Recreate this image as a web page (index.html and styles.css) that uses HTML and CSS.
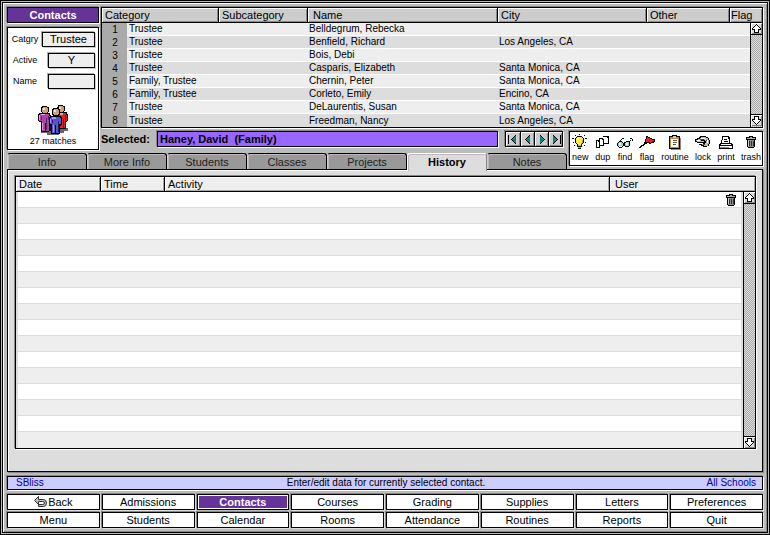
FILE: index.html
```html
<!DOCTYPE html>
<html lang="en">
<head>
    <meta charset="UTF-8">
    <meta name="viewport" content="width=device-width, initial-scale=1.0">
    <title>Contacts</title>
    <link rel="stylesheet" href="styles.css">
</head>
<body>
    <svg class="sprites" width="0" height="0" aria-hidden="true">
        <symbol id="trash" viewBox="0 0 12 12">
            <path fill="#000" d="M4 0h4v1h3v3h-1v7h-1v1H3v-1H2V4H1V1h3z"/>
            <path fill="#aaa" d="M5 1h2v1H5zM2 2h8v1H2z"/>
            <path fill="#888" d="M3 4h6v7H3z"/>
            <path fill="#333" d="M4 5h1v5H4zM6 5h1v5H6zM8 5h1v5H8z"/>
            <path fill="#ccc" d="M3 4h1v6H3z"/>
        </symbol>
        <symbol id="arrow" viewBox="0 0 9 9">
            <path fill="#000" d="M4 0h1v1h1v1h1v1h1v1h1v2H7v3H2V6H0V4h1V3h1V2h1V1h1z"/>
            <path fill="#fff" d="M4 1h1v1h1v1h1v1h1v1H6v3H3V5H1V4h1V3h1V2h1z"/>
        </symbol>
    </svg>

    <div class="window">
        <div class="top">
            <aside class="sidebar">
                <h1 class="title">Contacts</h1>
                <form class="filter">
                    <label for="category">Catgry</label>
                    <input class="field wide" id="category" type="text" value="Trustee">
                    <label for="active">Active</label>
                    <input class="field" id="active" type="text" value="Y">
                    <label for="name">Name</label>
                    <input class="field" id="name" type="text">
                    <div class="matches">
                        <svg width="31" height="30" viewBox="0 0 31 30" shape-rendering="crispEdges" aria-hidden="true">
                            <path fill="#666" d="M22 22h6v1h2v3h-4v2h-5v2H9v-2H3v-2h19z"/>
                            <path fill="#000" d="M20 0h5v1h2v5h-1v1h3v2h1v7h-1v1h-1v7h-8V7h-1V2h1z"/>
                            <path fill="#d22" d="M21 8h7v2h1v6h-2v7h-5v-8h-1z"/>
                            <path fill="#f99" d="M22 8h3v2h-3z"/>
                            <path fill="#811" d="M25 14h1v9h-1zM27 10h1v5h-1z"/>
                            <path fill="#c9a27c" d="M21 1h4v1h1v4h-1v1h-4z"/>
                            <path fill="#f5ddc0" d="M21 2h2v2h-2z"/>
                            <path fill="#000" d="M4 1h5v1h2v5h-1v1h2v2h1v16h-2v1H3v-10H1v-1H0V9h1V8h3V7H3V2h1z"/>
                            <path fill="#a4a" d="M2 9h9v2h1v7h-1v8H8v-8H7v8H4V16H1v-6h1z"/>
                            <path fill="#e9e" d="M3 9h4v1H3zM1 10h1v5H1zM4 18h1v7H4z"/>
                            <path fill="#626" d="M3 11h1v4H3zM8 13h1v12H8zM10 11h1v4h-1z"/>
                            <path fill="#c9a27c" d="M5 2h4v1h1v4H9v1H5V7H4V3h1z"/>
                            <path fill="#f5ddc0" d="M5 3h2v2H5z"/>
                            <path fill="#000" d="M15 3h6v1h1v6h-1v1h2v1h1v8h-1v1h-1v8h-9v-8h-1v-1h-1v-8h1v-1h3v-1h-1V4h1z"/>
                            <path fill="#55c" d="M13 12h9v1h1v6h-2v9h-3v-8h-1v8h-3v-9h-2v-6h1z"/>
                            <path fill="#99f" d="M14 12h4v2h-4zM12 14h1v4h-1zM15 20h1v7h-1z"/>
                            <path fill="#226" d="M14 15h1v3h-1zM20 16h1v11h-1z"/>
                            <path fill="#c9a27c" d="M16 4h4v1h1v4h-1v1h-4V9h-1V5h1z"/>
                            <path fill="#f5ddc0" d="M16 5h2v2h-2z"/>
                        </svg>
                        <span>27 matches</span>
                    </div>
                </form>
            </aside>

            <table class="list">
                <colgroup>
                    <col class="c-num"><col class="c-cat"><col class="c-sub"><col><col class="c-city"><col class="c-other"><col class="c-flag"><col class="c-scroll">
                </colgroup>
                <thead>
                    <tr>
                        <th colspan="2">Category</th>
                        <th>Subcategory</th>
                        <th class="h-name">Name</th>
                        <th>City</th>
                        <th>Other</th>
                        <th class="h-flag" colspan="2">Flag</th>
                    </tr>
                </thead>
                <tbody>
                    <tr><td class="num">1</td><td>Trustee</td><td></td><td>Belldegrum, Rebecka</td><td></td><td></td><td></td>
                        <td class="scroll"><button class="scroll-btn" aria-label="Scroll up"><svg width="9" height="9"><use href="#arrow"/></svg></button></td></tr>
                    <tr><td class="num">2</td><td>Trustee</td><td></td><td>Benfield, Richard</td><td>Los Angeles, CA</td><td></td><td></td><td class="scroll" rowspan="6"></td></tr>
                    <tr><td class="num">3</td><td>Trustee</td><td></td><td>Bois, Debi</td><td></td><td></td><td></td></tr>
                    <tr><td class="num">4</td><td>Trustee</td><td></td><td>Casparis, Elizabeth</td><td>Santa Monica, CA</td><td></td><td></td></tr>
                    <tr><td class="num">5</td><td>Family, Trustee</td><td></td><td>Chernin, Peter</td><td>Santa Monica, CA</td><td></td><td></td></tr>
                    <tr><td class="num">6</td><td>Family, Trustee</td><td></td><td>Corleto, Emily</td><td>Encino, CA</td><td></td><td></td></tr>
                    <tr><td class="num">7</td><td>Trustee</td><td></td><td>DeLaurentis, Susan</td><td>Santa Monica, CA</td><td></td><td></td></tr>
                    <tr><td class="num">8</td><td>Trustee</td><td></td><td>Freedman, Nancy</td><td>Los Angeles, CA</td><td></td><td></td>
                        <td class="scroll"><button class="scroll-btn down" aria-label="Scroll down"><svg width="9" height="9"><use href="#arrow"/></svg></button></td></tr>
                </tbody>
            </table>

            <div class="selected">
                <label for="selected">Selected:</label>
                <input id="selected" type="text" value="Haney, David  (Family)" readonly>
                <div class="pager">
                    <button aria-label="First"><svg width="12" height="9" viewBox="0 0 12 9" shape-rendering="crispEdges"><path d="M1 0h1v9H1zM8 0h1v9H8V8H7V7H6V6H5V5H4V4h1V3h1V2h1V1h1z"/><path class="teal" d="M9 1v7H8V7H7V6H6V5H5V4h1V3h1V2h1V1z"/></svg></button>
                    <button aria-label="Previous"><svg width="12" height="9" viewBox="0 0 12 9" shape-rendering="crispEdges"><path d="M7 0h1v9H7V8H6V7H5V6H4V5H3V4h1V3h1V2h1V1h1z"/><path class="teal" d="M8 1v7H7V7H6V6H5V5H4V4h1V3h1V2h1V1z"/></svg></button>
                    <button aria-label="Next"><svg width="12" height="9" viewBox="0 0 12 9" shape-rendering="crispEdges"><path d="M4 0h1v1h1v1h1v1h1v1h1v1H8v1H7v1H6v1H5v1H4z"/><path class="teal" d="M4 1h1v1h1v1h1v1h1v1H7v1H6v1H5v1H4z"/></svg></button>
                    <button aria-label="Last"><svg width="12" height="9" viewBox="0 0 12 9" shape-rendering="crispEdges"><path d="M10 0h1v9h-1zM3 0h1v1h1v1h1v1h1v1h1v1H7v1H6v1H5v1H4v1H3z"/><path class="teal" d="M3 1h1v1h1v1h1v1h1v1H6v1H5v1H4v1H3z"/></svg></button>
                </div>
            </div>

            <div class="toolbar">
                <button>
                    <svg width="16" height="16" viewBox="0 0 16 16" shape-rendering="crispEdges">
                        <path d="M5 2h5v1h1v1h1v5h-1v1h-1v3H9v2H6v-2H5v-3H4V9H3V4h1V3h1zM7 0h1v1H7zM3 1h1v1H3zM12 1h1v1h-1zM0 4h2v1H0zM13 4h2v1h-2zM1 8h1v1H1zM13 8h1v1h-1zM2 11h1v1H2zM12 11h1v1h-1z"/>
                        <path fill="#fe3" d="M5 3h5v1h1v5h-1v1H9v1H6v-1H5V9H4V4h1z"/>
                        <path fill="#fff" d="M5 4h2v2H5z"/>
                        <path fill="#c90" d="M10 6h1v3h-1v1H9V9h1z"/>
                        <path fill="#aaa" d="M6 11h3v1H6zM6 13h3v1H6z"/>
                    </svg>new
                </button>
                <button>
                    <svg width="16" height="16" viewBox="0 0 16 16" shape-rendering="crispEdges">
                        <path d="M8 2h6v8H9v2H5v2H1V6h3V4h4z"/>
                        <path fill="#fff" d="M9 3h3v1h1v5H9V5H8V3zM5 5h2v1h1v5H5zM2 7h1v1h1v5H2z"/>
                    </svg>dup
                </button>
                <button>
                    <svg width="16" height="16" viewBox="0 0 16 16" shape-rendering="crispEdges">
                        <path fill="#9cc" d="M1 8h5v4H1zM8 8h4v4H8z"/>
                        <path fill="#dff" d="M2 9h2v2H2zM9 9h2v2H9z"/>
                        <path d="M2 7h3v1H2zM1 8h1v1H1zM0 9h1v3H0zM1 12h1v1H1zM2 13h3v1H2zM5 12h1v1H5zM6 9h1v3H6zM5 8h1v1H5zM7 8h2v1H7zM7 9h1v3H7zM9 7h3v1H9zM12 8h1v4h-1zM8 12h4v1H8zM3 6h1v1H3zM4 5h1v1H4zM5 4h2v1H5zM12 7h1v1h-1zM13 6h1v1h-1zM13 4h2v1h-2zM15 5h1v2h-1z"/>
                    </svg>find
                </button>
                <button>
                    <svg width="16" height="16" viewBox="0 0 16 16" shape-rendering="crispEdges">
                        <path d="M7 2h2v1h2v1h2v1h3v3h-1v1h-3v1h-2V9H8v1H6v1H5v1H3v1H2v1H0v-1h1v-1h1v-1h2v-1h1V8h1V5h1z"/>
                        <path fill="#f11" d="M8 3h1v1h2v1h2v1h2v1h-1v1h-2v1h-1V8H7V5h1z"/>
                    </svg>flag
                </button>
                <button>
                    <svg width="16" height="16" viewBox="0 0 16 16" shape-rendering="crispEdges">
                        <path fill="#888" d="M4 4h10v12H4z"/>
                        <path d="M5 1h5v1h3v13H2V2h3z"/>
                        <path fill="#b84" d="M3 3h9v11H3z"/>
                        <path fill="#ffe" d="M4 5h7v8H4z"/>
                        <path fill="#ccc" d="M6 2h3v2H6z"/>
                        <path fill="#555" d="M6 6h4v1H6zM6 8h4v1H6zM6 10h3v1H6z"/>
                    </svg>routine
                </button>
                <button>
                    <svg width="16" height="16" viewBox="0 0 16 16" shape-rendering="crispEdges">
                        <path d="M5 2h6v1h2v1h1v2h1v4h-1v2h-2v1H8v-1H6v-1H4v-1h4V9H2V8H0V5h2V4h2V3h1z"/>
                        <path fill="#bbb" d="M6 3h5v1h2v2h1v4h-1v2H9v-1H7v-1h3V9h1V7h-1V6H6v1h3v1H2V7H1V6h2V5h2V4h1z"/>
                        <path fill="#fff" d="M6 4h4v1H6zM2 6h3v1H2zM12 6h1v3h-1z"/>
                        <path fill="#444" d="M5 5h4v1H5zM11 6h1v1h-1zM8 10h2v1H8z"/>
                    </svg>lock
                </button>
                <button>
                    <svg width="16" height="16" viewBox="0 0 16 16" shape-rendering="crispEdges">
                        <path d="M4 2h7v1h1v6h2v1h1v5H1v-5h1V9h1V6h1z"/>
                        <path fill="#fff" d="M5 3h5v2h1v4H4V6h1zM3 10h10v1H3zM2 12h12v2H2z"/>
                        <path d="M6 5h3v1H6zM6 7h4v1H6z"/>
                        <path fill="#888" d="M2 13h9v1H2z"/>
                    </svg>print
                </button>
                <button>
                    <svg width="16" height="16" viewBox="-2 -2 16 16" shape-rendering="crispEdges"><use href="#trash" width="12" height="12"/></svg>trash
                </button>
            </div>

            <nav class="tabs">
                <button>Info</button>
                <button>More Info</button>
                <button>Students</button>
                <button>Classes</button>
                <button>Projects</button>
                <button class="active">History</button>
                <button>Notes</button>
            </nav>
        </div>

        <main class="panel">
            <table class="history">
                <colgroup>
                    <col class="c-date"><col class="c-time"><col><col class="c-user"><col class="c-scroll">
                </colgroup>
                <thead>
                    <tr><th>Date</th><th>Time</th><th>Activity</th><th class="h-name" colspan="2">User</th></tr>
                </thead>
                <tbody>
                    <tr><td></td><td></td><td></td>
                        <td class="remove"><button aria-label="Delete entry"><svg width="12" height="12" shape-rendering="crispEdges"><use href="#trash"/></svg></button></td>
                        <td class="scroll"><button class="scroll-btn" aria-label="Scroll up"><svg width="9" height="9"><use href="#arrow"/></svg></button></td></tr>
                    <tr><td></td><td></td><td></td><td></td><td class="scroll" rowspan="14"></td></tr>
                    <tr><td></td><td></td><td></td><td></td></tr>
                    <tr><td></td><td></td><td></td><td></td></tr>
                    <tr><td></td><td></td><td></td><td></td></tr>
                    <tr><td></td><td></td><td></td><td></td></tr>
                    <tr><td></td><td></td><td></td><td></td></tr>
                    <tr><td></td><td></td><td></td><td></td></tr>
                    <tr><td></td><td></td><td></td><td></td></tr>
                    <tr><td></td><td></td><td></td><td></td></tr>
                    <tr><td></td><td></td><td></td><td></td></tr>
                    <tr><td></td><td></td><td></td><td></td></tr>
                    <tr><td></td><td></td><td></td><td></td></tr>
                    <tr><td></td><td></td><td></td><td></td></tr>
                    <tr><td></td><td></td><td></td><td></td></tr>
                    <tr><td></td><td></td><td></td><td></td>
                        <td class="scroll bottom"><button class="scroll-btn down" aria-label="Scroll down"><svg width="9" height="9"><use href="#arrow"/></svg></button></td></tr>
                </tbody>
            </table>
        </main>

        <div class="status">
            <span class="who">SBliss</span>
            <span class="hint">Enter/edit data for currently selected contact.</span>
            <span class="where">All Schools</span>
        </div>

        <nav class="menu">
            <button><svg width="14" height="12" viewBox="0 0 14 12" aria-hidden="true"><path fill="#bbb" stroke="#333" d="M4.500 .5v3h5q3 0 3 3.500t-3 3.500h-5v-2h4q2 0 2-1.500t-2-1.500h-4v3l-4-4z"/></svg>Back</button>
            <button>Admissions</button>
            <button class="current">Contacts</button>
            <button>Courses</button>
            <button>Grading</button>
            <button>Supplies</button>
            <button>Letters</button>
            <button>Preferences</button>
            <button>Menu</button>
            <button>Students</button>
            <button>Calendar</button>
            <button>Rooms</button>
            <button>Attendance</button>
            <button>Routines</button>
            <button>Reports</button>
            <button>Quit</button>
        </nav>
    </div>
</body>
</html>
```
FILE: styles.css
```css
* {
    box-sizing: border-box;
}
body {
    margin: 0;
    background: #fff;
    color: #000;
    font: 11px/13px "Liberation Sans", Arial, sans-serif;
}
button, input {
    margin: 0;
    padding: 0;
    border: none;
    border-radius: 0;
    background: none;
    color: inherit;
    font: inherit;
}
svg {
    display: block;
    flex: none;
}
.sprites {
    position: absolute;
}
.window {
    display: flex;
    flex-direction: column;
    min-height: 100vh;
    padding: 4px;
    border: 3px double #000;
    background: #bbb;
    box-shadow: inset 1px 1px #fff, inset -1px -1px #888;
}

/* upper area */
.top {
    display: grid;
    grid-template-columns: 92px 1fr 194px;
    grid-template-rows: auto 22px auto;
    column-gap: 2px;
}
.sidebar {
    grid-column: 1;
    grid-row: 1 / 3;
    display: flex;
    flex-direction: column;
    gap: 4px;
}
.title {
    margin: 0;
    border: 1px solid #000;
    background: #639;
    box-shadow: 1px 1px #fff, -1px -1px #888;
    color: #fff;
    font-size: 11px;
    line-height: 14px;
    text-align: center;
}
.filter {
    flex: 1;
    display: grid;
    grid-template-columns: 28px 1fr;
    grid-template-rows: 15px 15px 15px 1fr;
    gap: 6px 2px;
    padding: 4px 3px 1px;
    border: 1px solid #000;
    background: #fff;
    box-shadow: 1px 1px #fff, -1px -1px #888;
    font-size: 9px;
    line-height: 15px;
    text-align: center;
}
.field {
    justify-self: end;
    width: 47px;
    height: 15px;
    border: 1px solid #000;
    background: #eee;
    box-shadow: 1px 1px #ccc, -1px -1px #aaa;
    font-size: 11px;
    text-align: center;
}
.field.wide {
    width: 53px;
}
.matches {
    grid-column: 1 / 3;
    display: flex;
    flex-direction: column;
    align-items: center;
    justify-content: flex-end;
}
.matches span {
    line-height: 13px;
}

/* tables */
table {
    width: 100%;
    border: 1px solid #000;
    border-collapse: separate;
    border-spacing: 0;
    table-layout: fixed;
    box-shadow: 1px 1px #fff, -1px -1px #888;
}
th {
    height: 15px;
    padding: 0 0 0 3px;
    border-right: 1px solid #000;
    border-bottom: 1px solid #000;
    background: #ccc;
    box-shadow: inset 1px 1px #fff, inset -1px -1px #888;
    font-weight: normal;
    line-height: 14px;
    text-align: left;
    white-space: nowrap;
}
th:last-child {
    border-right: none;
}
th.h-name {
    padding-left: 5px;
}
th.h-flag {
    padding-left: 1px;
}
td {
    padding: 0 0 0 1px;
    white-space: nowrap;
}
.list {
    grid-column: 2 / 4;
    grid-row: 1;
}
.list td {
    height: 13px;
    border-bottom: 1px solid #fff;
    background: #eee;
    font-size: 10px;
    line-height: 12px;
}
.list tr:nth-child(even) td {
    background: #ddd;
}
.list tbody tr:last-child td {
    border-bottom: none;
}
.list tbody tr .num:first-child {
    border-bottom: none;
    background: #aaa;
    text-align: center;
}
.list td:nth-child(2) {
    padding-left: 2px;
}
.c-num { width: 25px; }
.c-cat { width: 92px; }
.c-sub { width: 89px; }
.c-city { width: 149px; }
.c-other { width: 83px; }
.c-flag { width: 20px; }
.c-scroll { width: 12px; }
.c-date { width: 85px; }
.c-time { width: 64px; }
.c-user { width: 133px; }

/* selected record */
.selected {
    grid-column: 2;
    grid-row: 2;
    display: flex;
    align-items: center;
    align-self: start;
    height: 16px;
    margin-top: 3px;
    padding-right: 4px;
    font-weight: bold;
}
.selected label {
    width: 56px;
}
.selected input {
    flex: 1;
    min-width: 0;
    height: 16px;
    margin-right: 7px;
    padding-left: 2px;
    border: 1px solid #000;
    background: #96f;
    box-shadow: 1px 1px #fff, -1px -1px #888;
}
.pager {
    display: flex;
    border: 1px solid #000;
    box-shadow: 1px 1px #fff, -1px -1px #888;
}
.pager button {
    display: grid;
    place-items: center;
    width: 14px;
    height: 14px;
    background: #ccc;
    box-shadow: inset 1px 1px #fff, inset -1px -1px #888;
}
.pager button + button {
    border-left: 1px solid #000;
}
.teal {
    fill: #088;
}

.toolbar {
    grid-column: 3;
    grid-row: 2 / 4;
    display: flex;
    justify-content: space-between;
    margin: 3px 0;
    padding: 2px 1px 0 2px;
    border: 1px solid #000;
    background: #fff;
    box-shadow: 1px 1px #fff, -1px -1px #888;
    font-size: 9px;
    line-height: 14px;
}
.toolbar button {
    display: flex;
    flex-direction: column;
    align-items: center;
}

.tabs {
    grid-column: 1 / 3;
    grid-row: 3;
    display: flex;
    margin-top: 3px;
}
.tabs button {
    flex: 1;
    height: 16px;
    padding-top: 2px;
    border: 1px solid #000;
    border-bottom: none;
    border-left-color: #ccc;
    border-radius: 3px 3px 0 0;
    background: #999;
    box-shadow: inset 1px 1px #bbb;
    color: #222;
}
.tabs .active {
    height: 18px;
    margin-bottom: -2px;
    padding: 0;
    border-color: #fff #888 #ddd #fff;
    background: #ddd;
    color: #000;
    font-weight: bold;
    z-index: 1;
}

/* history panel */
.panel {
    flex: 1;
    margin: 0 0 4px;
    padding: 6px 6px 22px 7px;
    border: 1px solid #000;
    background: #ddd;
    box-shadow: inset 1px 1px #fff, 1px 1px #888;
}
.history th {
    background: #eee;
    box-shadow: inset 1px 1px #fff, inset -1px -1px #aaa;
}
.history td {
    height: 16px;
    border-bottom: 1px solid #ddd;
    background: #fff;
}
.history tr:nth-child(even) td {
    background: #eee;
}
.history td:first-child {
    border-left: 2px solid #ddd;
}
.history td:nth-child(4) {
    border-right: 2px solid #ddd;
}
.history tbody tr:last-child td {
    border-bottom: none;
}
.history .remove {
    padding-right: 4px;
}
.remove button {
    display: block;
    margin-left: auto;
}

/* scrollbars */
table tbody tr .scroll:last-child {
    padding: 0;
    border-bottom: none;
    border-left: 1px solid #000;
    background: repeating-conic-gradient(#aaa 0 25%, #ddd 0 50%) 0 0 / 2px 2px;
    vertical-align: top;
}
table tbody tr .bottom:last-child {
    vertical-align: bottom;
}
.scroll-btn {
    display: grid;
    place-items: center;
    width: 100%;
    height: 12px;
    border-bottom: 1px solid #000;
    background: #ddd;
    box-shadow: inset 1px 1px #fff, inset -1px -1px #888;
}
.scroll-btn.down {
    border-top: 1px solid #000;
    border-bottom: none;
}
.scroll-btn.down svg {
    transform: rotate(180deg);
}

/* footer */
.status {
    display: grid;
    grid-template-columns: 1fr auto 1fr;
    margin-bottom: 4px;
    padding: 0 6px 0 8px;
    border: 1px solid #000;
    background: #ccf;
    box-shadow: 1px 1px #fff, -1px -1px #888;
    font-size: 10px;
    line-height: 12px;
}
.who, .where {
    color: #00a;
}
.where {
    text-align: right;
}
.menu {
    display: grid;
    grid-template-columns: repeat(8, 1fr);
    gap: 2px;
}
.menu button {
    display: flex;
    align-items: center;
    justify-content: center;
    height: 16px;
    border: 1px solid #000;
    background: #fff;
    box-shadow: 1px 1px #ddd, -1px -1px #888;
}
.menu .current {
    background: #639;
    box-shadow: inset 0 0 0 1px #fff, -1px -1px #888;
    color: #fff;
    font-weight: bold;
}
```
